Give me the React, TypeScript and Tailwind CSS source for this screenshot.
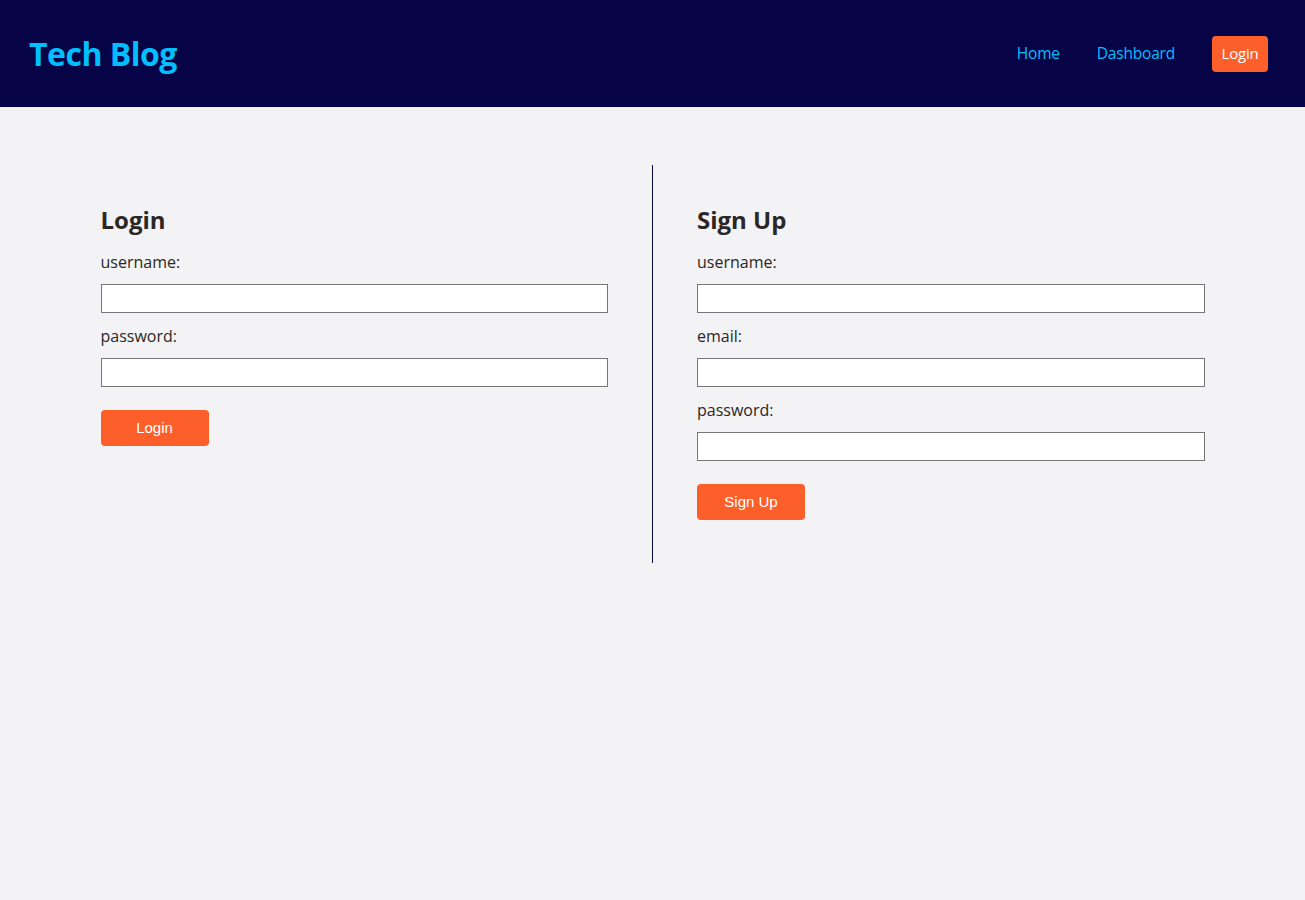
export default function App() {
  return (
    <div className="min-h-[900px] bg-[#f3f2f5] font-['Open_Sans',sans-serif]">
      <header className="h-[107px] bg-[#070347] flex items-center justify-between pl-[29px] pr-[37px]">
        <h1 className="text-[32px] font-bold text-[#00bfff] tracking-[-0.5px]">Tech Blog</h1>
        <nav className="flex items-center text-[15.5px] tracking-[-0.2px] text-[#00bfff]">
          <a className="mr-[37px]">Home</a>
          <a className="mr-[37px]">Dashboard</a>
          <button className="h-[36px] w-[56px] rounded-[4px] bg-[#fd5f2a] text-white text-[15px]">Login</button>
        </nav>
      </header>

      <main className="max-w-[1192px] mx-auto mt-[58px] flex text-[#2b2724]">
        <section className="flex-1 px-[44px] pt-[40px] pb-[43px] border-r border-[#0a0640]">
          <h2 className="text-[24px] font-bold leading-[30px] mb-[17px]">Login</h2>
          <Field label="username:" />
          <Field label="password:" type="password" />
          <SubmitButton text="Login" />
        </section>
        <section className="flex-1 px-[44px] pt-[40px] pb-[43px]">
          <h2 className="text-[24px] font-bold leading-[30px] mb-[17px]">Sign Up</h2>
          <Field label="username:" />
          <Field label="email:" />
          <Field label="password:" type="password" />
          <SubmitButton text="Sign Up" />
        </section>
      </main>
    </div>
  );
}

function Field({ label, type = "text" }: { label: string; type?: string }) {
  return (
    <div className="flex flex-col">
      <label className="text-[16px] leading-[20px] mb-[12px]">{label}</label>
      <input
        type={type}
        className="h-[29px] w-full bg-white border border-[#767676] mb-[13px]"
      />
    </div>
  );
}

function SubmitButton({ text }: { text: string }) {
  return (
    <button className="mt-[10px] h-[36px] w-[108px] rounded-[4px] bg-[#fd5f2a] text-white text-[15px] font-['Liberation_Sans',Arial,sans-serif]">
      {text}
    </button>
  );
}
